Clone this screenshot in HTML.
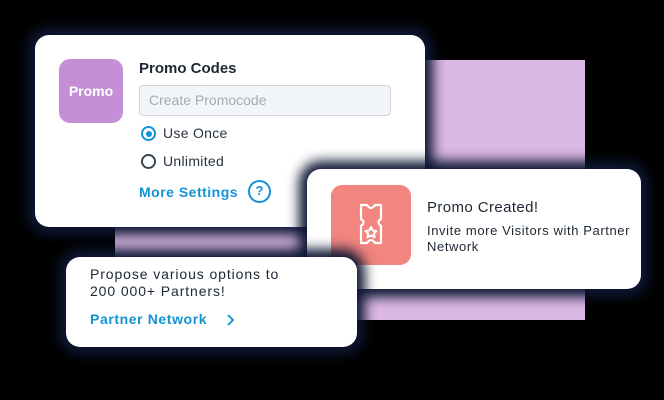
<!DOCTYPE html>
<html><head><meta charset="utf-8"><style>
*{margin:0;padding:0;box-sizing:border-box}
body{width:664px;height:400px;background:#000;position:relative;overflow:hidden;font-family:"Liberation Sans",sans-serif}
.card{position:absolute;background:#fff;border-radius:14px;box-shadow:0 0 12px 8px #0e1733}
.purple{position:absolute;left:115px;top:60px;width:470px;height:260px;background:#dcb8e6}
.t{position:absolute;white-space:nowrap}
</style></head><body>
<div class="purple"></div>
<div class="card" style="left:35px;top:35px;width:390px;height:192px">
  <div style="position:absolute;left:24px;top:24px;width:64px;height:64px;background:#c68ed6;border-radius:11px;color:#fff;font-weight:bold;font-size:14px;line-height:64px;text-align:center">Promo</div>
  <div class="t" style="left:104px;top:25px;font-size:15px;font-weight:bold;color:#1d2733">Promo Codes</div>
  <div style="position:absolute;left:104px;top:50px;width:252px;height:31px;background:#f3f6f9;border:1px solid #cfd6de;border-radius:4px;color:#a3acb6;font-size:14px;line-height:29px;padding-left:9px">Create Promocode</div>
  <div style="position:absolute;left:106px;top:91px;width:15px;height:15px;border:2px solid #1293d6;border-radius:50%"><div style="position:absolute;left:2.5px;top:2.5px;width:6px;height:6px;background:#1293d6;border-radius:50%"></div></div>
  <div class="t" style="left:128px;top:90px;font-size:14px;color:#2a3440;letter-spacing:.3px">Use Once</div>
  <div style="position:absolute;left:106px;top:119px;width:15px;height:15px;border:2px solid #3a4452;border-radius:50%"></div>
  <div class="t" style="left:128px;top:118px;font-size:14px;color:#2a3440;letter-spacing:.3px">Unlimited</div>
  <div class="t" style="left:104px;top:149px;font-size:14px;font-weight:bold;color:#1293d6;letter-spacing:.5px">More Settings</div>
  <div style="position:absolute;left:213px;top:145px;width:23px;height:23px;border:2.5px solid #1293d6;border-radius:50%;color:#1293d6;font-weight:bold;font-size:13px;line-height:18px;text-align:center">?</div>
</div>
<div class="card" style="left:307px;top:169px;width:334px;height:120px">
  <div style="position:absolute;left:24px;top:16px;width:80px;height:80px;background:#f2857f;border-radius:11px">
    <svg width="80" height="80" viewBox="0 0 80 80" style="position:absolute;left:0;top:0">
      <path d="M30 20 H36 Q40 26 44 20 H50 V34 Q45 37 50 41 V58 H44 Q40 52 36 58 H30 V41 Q35 37 30 34 Z" fill="none" stroke="#fff" stroke-width="2.2" stroke-linejoin="round"/>
      <path d="M40 42 L41.8 45.6 L45.6 46 L42.8 48.6 L43.6 52.4 L40 50.4 L36.4 52.4 L37.2 48.6 L34.4 46 L38.2 45.6 Z" fill="none" stroke="#fff" stroke-width="2" stroke-linejoin="round"/>
    </svg>
  </div>
  <div class="t" style="left:120px;top:30px;font-size:15px;color:#1d2733;letter-spacing:.4px">Promo Created!</div>
  <div class="t" style="left:120px;top:54px;font-size:13px;line-height:16px;color:#1d2733;letter-spacing:.6px">Invite more Visitors with Partner<br>Network</div>
</div>
<div class="card" style="left:66px;top:257px;width:291px;height:90px">
  <div class="t" style="left:24px;top:9px;font-size:14px;line-height:17px;color:#1d2733;letter-spacing:.9px">Propose various options to<br>200 000+ Partners!</div>
  <div class="t" style="left:24px;top:54px;font-size:14px;font-weight:bold;color:#1293d6;letter-spacing:.6px">Partner Network</div>
  <svg width="10" height="14" style="position:absolute;left:159px;top:56px"><path d="M3 2 L8 7 L3 12" fill="none" stroke="#1293d6" stroke-width="1.8"/></svg>
</div>
</body></html>
